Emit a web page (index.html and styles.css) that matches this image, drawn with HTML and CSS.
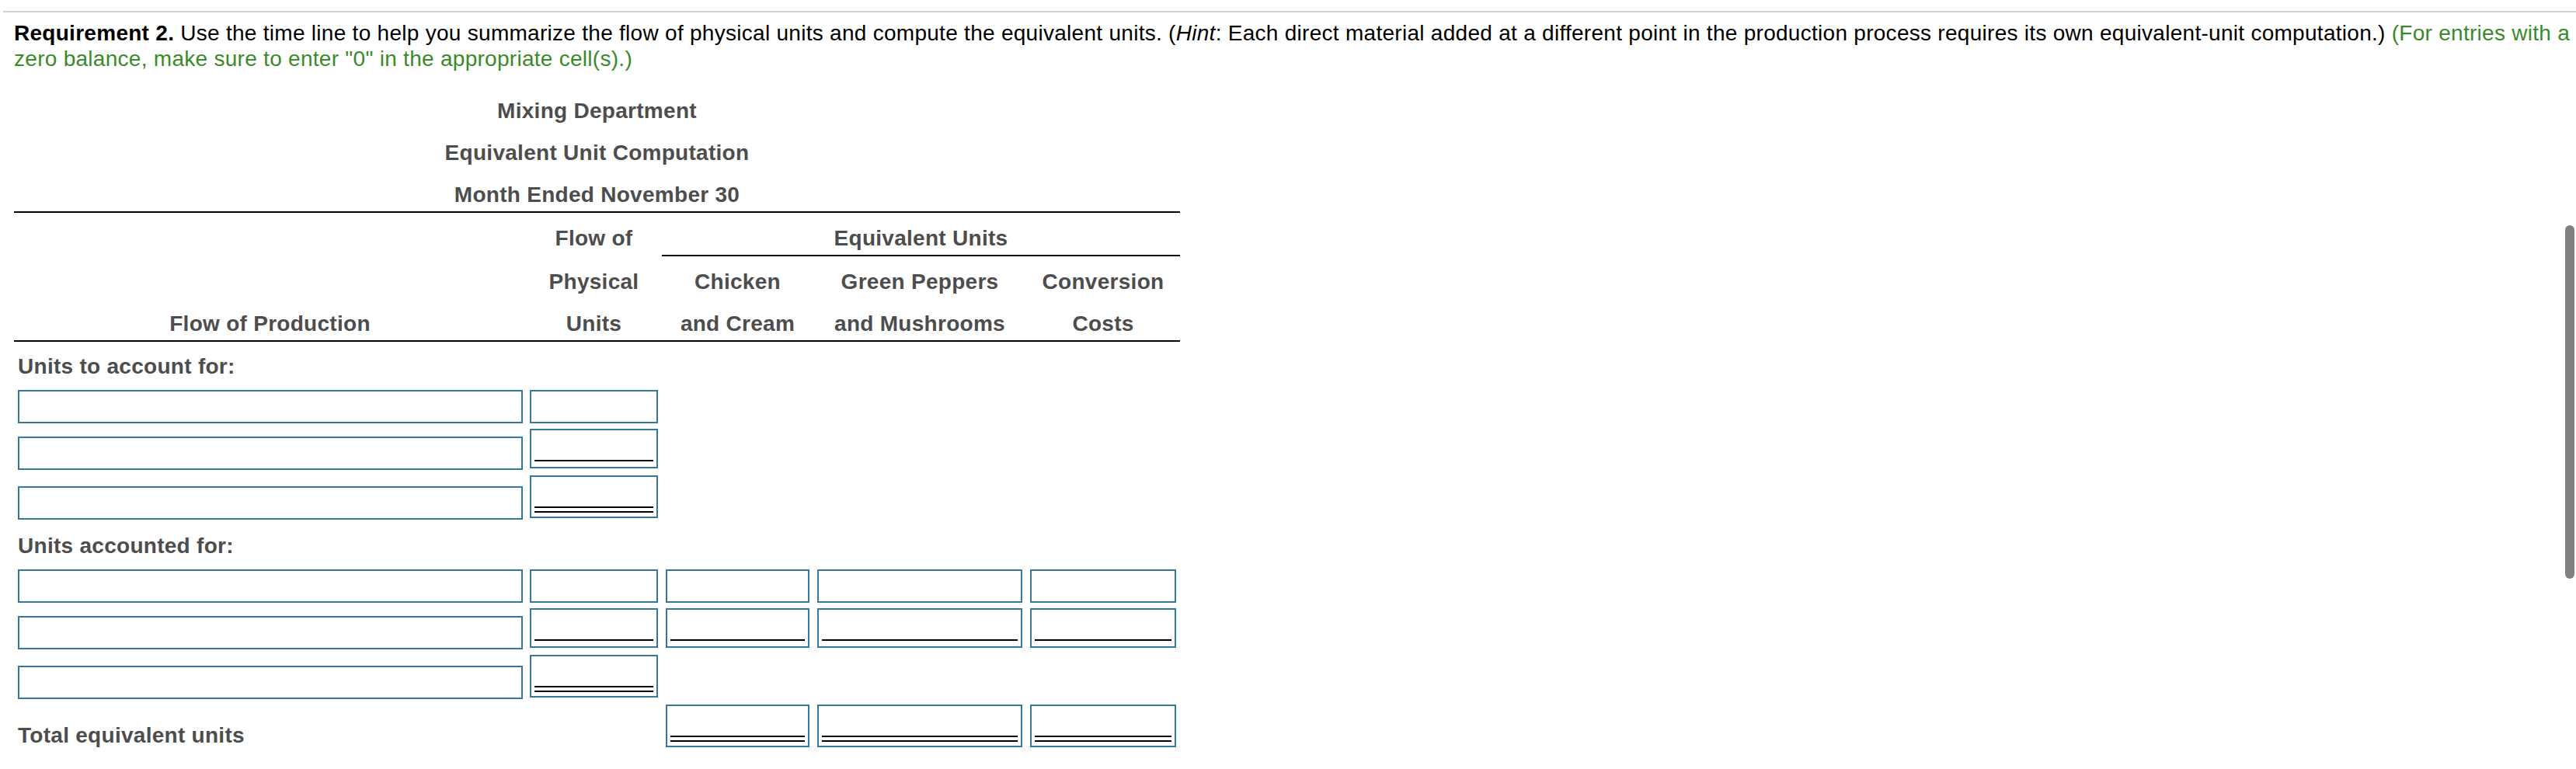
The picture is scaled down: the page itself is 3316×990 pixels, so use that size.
FILE: index.html
```html
<!DOCTYPE html>
<html lang="en">
<head>
<meta charset="utf-8">
<title>Requirement 2</title>
<link rel="stylesheet" href="styles.css">
</head>
<body>
<div class="page">
  <div class="rule"></div>
  <div class="content">
    <p class="question"><b>Requirement 2.</b> Use the time line to help you summarize the flow of physical units and compute the equivalent units. (<i>Hint</i>: Each direct material added at a different point in the production process requires its own equivalent-unit computation.) <span class="note">(For entries with a zero balance, make sure to enter "0" in the appropriate cell(s).)</span></p>

    <div class="sheet">
      <div class="titles">
        <div class="title">Mixing Department</div>
        <div class="title">Equivalent Unit Computation</div>
        <div class="title">Month Ended November 30</div>
      </div>

      <div class="head">
        <div class="h c2">Flow of</div>
        <div class="h eq">Equivalent Units</div>
        <div class="h c2">Physical</div>
        <div class="h c3">Chicken</div>
        <div class="h c4">Green Peppers</div>
        <div class="h c5">Conversion</div>
        <div class="h c1">Flow of Production</div>
        <div class="h c2">Units</div>
        <div class="h c3">and Cream</div>
        <div class="h c4">and Mushrooms</div>
        <div class="h c5">Costs</div>
      </div>

      <div class="body">
        <div class="label">Units to account for:</div>

        <div class="cell c1"><div class="box"><div class="field"></div></div></div>
        <div class="cell c2"><div class="box"><div class="field"></div></div></div>

        <div class="cell c1"><div class="box"><div class="field"></div></div></div>
        <div class="cell c2"><div class="box single"><div class="field"></div></div></div>

        <div class="cell c1"><div class="box"><div class="field"></div></div></div>
        <div class="cell c2"><div class="box double"><div class="field"></div></div></div>

        <div class="label">Units accounted for:</div>

        <div class="cell c1"><div class="box"><div class="field"></div></div></div>
        <div class="cell c2"><div class="box"><div class="field"></div></div></div>
        <div class="cell c3"><div class="box"><div class="field"></div></div></div>
        <div class="cell c4"><div class="box"><div class="field"></div></div></div>
        <div class="cell c5"><div class="box"><div class="field"></div></div></div>

        <div class="cell c1"><div class="box"><div class="field"></div></div></div>
        <div class="cell c2"><div class="box single"><div class="field"></div></div></div>
        <div class="cell c3"><div class="box single"><div class="field"></div></div></div>
        <div class="cell c4"><div class="box single"><div class="field"></div></div></div>
        <div class="cell c5"><div class="box single"><div class="field"></div></div></div>

        <div class="cell c1"><div class="box"><div class="field"></div></div></div>
        <div class="cell c2"><div class="box double"><div class="field"></div></div></div>

        <div class="cell c1 total">Total equivalent units</div>
        <div class="cell c3"><div class="box double"><div class="field"></div></div></div>
        <div class="cell c4"><div class="box double"><div class="field"></div></div></div>
        <div class="cell c5"><div class="box double"><div class="field"></div></div></div>
      </div>
    </div>
  </div>
  <div class="scroll-thumb"></div>
</div>
</body>
</html>
```

FILE: styles.css
```css
html, body {
  margin: 0;
  padding: 0;
  background: #ffffff;
}

body {
  font-family: "Liberation Sans", Arial, Helvetica, sans-serif;
  font-size: 28px;
  letter-spacing: 0.28px;
  color: #000000;
}

.page {
  padding-left: 4px;
}

.rule {
  margin-top: 14px;
  border-top: 2px solid #cdd1da;
}

.content {
  padding: 0 4px 0 14px;
}

.question {
  margin: 10px 0 0 0;
  line-height: 33px;
}

.question .note {
  color: #3a8a2b;
}

.sheet {
  width: 1501px;
  margin-top: 18px;
  color: #4d4d4d;
  font-weight: bold;
}

.title {
  text-align: center;
  line-height: 32px;
  padding: 17px 0 5px;
}

.head {
  display: grid;
  grid-template-columns: 659px 175px 195px 274px 198px;
  border-top: 2px solid #000000;
  border-bottom: 2px solid #000000;
}

.h {
  text-align: center;
  line-height: 32px;
  padding: 17px 0 5px;
  white-space: nowrap;
}

.c1 { grid-column: 1; }
.c2 { grid-column: 2; }
.c3 { grid-column: 3; }
.c4 { grid-column: 4; }
.c5 { grid-column: 5; }

.h.eq {
  grid-column: 3 / span 3;
  border-bottom: 2px solid #000000;
}

.body {
  display: grid;
  grid-template-columns: 659px 175px 195px 274px 198px;
  row-gap: 7px;
  align-items: end;
  padding-top: 5px;
}

.label {
  grid-column: 1 / -1;
  line-height: 32px;
  padding: 11px 5px 7px;
}

.cell {
  padding: 0 5px;
}

.cell.c1 {
  padding-left: 5px;
  padding-right: 4px;
}

.cell.total {
  line-height: 32px;
  padding-bottom: 1px;
}

.box {
  border: 2px solid #35789a;
  padding: 0 4px;
  background: #ffffff;
}

.field {
  height: 39px;
}

.box.single,
.box.double {
  margin-bottom: 2px;
}

.box.single .field {
  height: 38px;
  border-bottom: 2px solid #000000;
  margin-bottom: 7px;
}

.box.double .field {
  position: relative;
  height: 38px;
  border-bottom: 2px solid #000000;
  margin-bottom: 11px;
}

.box.double .field::after {
  content: "";
  display: block;
  position: absolute;
  left: 0;
  right: 0;
  bottom: -8px;
  border-top: 2px solid #000000;
}

.scroll-thumb {
  position: fixed;
  top: 290px;
  right: 2px;
  width: 12px;
  height: 455px;
  border-radius: 6px;
  background: #7f7f7f;
}
```
